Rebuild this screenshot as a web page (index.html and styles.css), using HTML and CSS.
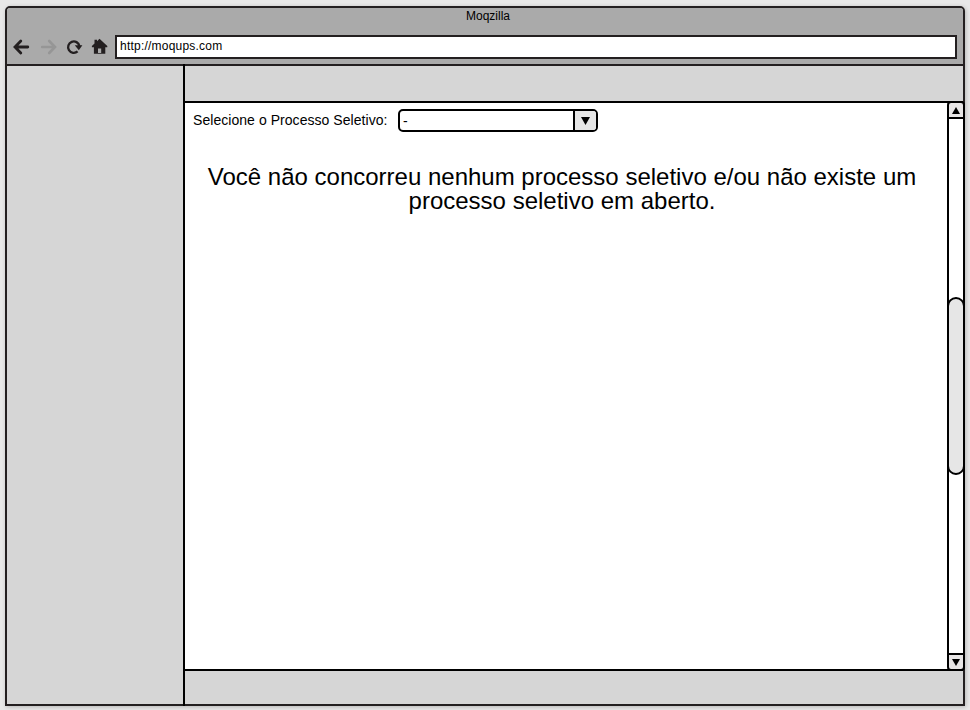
FILE: index.html
```html
<!DOCTYPE html>
<html lang="pt-BR">
<head>
<meta charset="utf-8">
<title>Moqzilla</title>
<link rel="stylesheet" href="styles.css">
</head>
<body>
<div class="window">
  <header class="chrome">
    <div class="title">Moqzilla</div>
    <div class="toolbar">
      <svg class="nav" width="108" height="24" viewBox="7 35 108 24" fill="none">
        <path d="M27.800 47H16M20.800 41L15 47L20.800 53" stroke="#231f20" stroke-width="2.8" stroke-linecap="round"/>
        <path d="M42.200 47H54M49.200 41L55 47L49.200 53" stroke="#969696" stroke-width="2.6" stroke-linecap="round"/>
        <path d="M77.600 51.400A5.700 5.700 0 1 1 79.400 46" stroke="#231f20" stroke-width="2.3"/>
        <path d="M74.800 45.200H82.400L78.800 50.200Z" fill="#231f20"/>
        <path d="M99.500 38.800L107.300 46V47.200H105.300V53.800H93.900V47.200H91.900V46L94.500 43.500V39.800H97V41.200ZM98 48.500V53H101.200V48.500Z" fill="#231f20" fill-rule="evenodd"/>
      </svg>
      <div class="url">http://moqups.com</div>
    </div>
  </header>
  <div class="body">
    <aside class="sidebar"></aside>
    <main class="main">
      <div class="banner"></div>
      <section class="content">
        <div class="page">
          <div class="field">
            <span class="label">Selecione o Processo Seletivo:</span>
            <div class="select">
              <span class="value">-</span>
              <span class="drop"><svg width="9" height="8" viewBox="0 0 9 8"><path d="M0 0H9L4.500 8Z"/></svg></span>
            </div>
          </div>
          <p class="message">Você não concorreu nenhum processo seletivo e/ou não existe um<br>processo seletivo em aberto.</p>
        </div>
        <div class="scrollbar">
          <div class="step up"><svg width="8" height="7" viewBox="0 0 8 7"><path d="M4 0L8 7H0Z"/></svg></div>
          <div class="track"><div class="thumb"></div></div>
          <div class="step down"><svg width="8" height="7" viewBox="0 0 8 7"><path d="M0 0H8L4 7Z"/></svg></div>
        </div>
      </section>
      <footer class="footer"></footer>
    </main>
  </div>
</div>
</body>
</html>
```
FILE: styles.css
```css
* { box-sizing: border-box; }
body {
  margin: 0;
  height: 710px;
  padding: 6px 5px 4px;
  overflow: hidden;
  background: #e8e8e8;
  font-family: "Liberation Sans", Arial, sans-serif;
  color: #000;
}
.window {
  width: 960px;
  height: 700px;
  display: flex;
  flex-direction: column;
  border: 2px solid #231f20;
  border-radius: 5px 5px 0 0;
  background: #d6d6d6;
  box-shadow: 1px 1px 4px rgba(0, 0, 0, .22);
}
.chrome {
  height: 58px;
  flex: none;
  border-bottom: 2px solid #231f20;
  border-radius: 3px 3px 0 0;
  background: #aaa;
}
.title {
  height: 27px;
  padding: 1px 0 0 6px;
  font-size: 12px;
  line-height: 14px;
  text-align: center;
}
.toolbar { display: flex; }
.nav { flex: none; display: block; }
.url {
  width: 842px;
  height: 24px;
  padding: 2px 3px;
  border: 2px solid #231f20;
  background: #fff;
  font-size: 12px;
  line-height: 14px;
  letter-spacing: .22px;
}
.body { flex: 1; display: flex; min-height: 0; }
.sidebar {
  width: 178px;
  margin: -2px 0;
  border-right: 2px solid #000;
}
.main { flex: 1; display: flex; flex-direction: column; }
.banner { height: 35px; }
.content {
  height: 570px;
  display: flex;
  border: solid #000;
  border-width: 2px 0;
  background: #fff;
}
.page { flex: 1; }
.field { display: flex; padding: 6px 0 0 8px; }
.label {
  width: 205px;
  font-size: 14px;
  line-height: 22px;
  letter-spacing: .05px;
  white-space: nowrap;
}
.select {
  width: 200px;
  height: 23px;
  display: flex;
  border: 2px solid #000;
  border-radius: 5px;
  background: #fff;
  overflow: hidden;
}
.value { flex: 1; padding-left: 3px; font-size: 14px; line-height: 20px; }
.drop {
  width: 23px;
  display: flex;
  align-items: center;
  justify-content: center;
  border-left: 2px solid #000;
  background: #e6e6e6;
}
.message {
  margin: 33px 0 0;
  padding-right: 8px;
  font-size: 24px;
  line-height: 24px;
  text-align: center;
  white-space: nowrap;
}
.scrollbar {
  width: 18px;
  margin: -2px -2px -2px 0;
  display: flex;
  flex-direction: column;
  flex: none;
  z-index: 1;
}
.step {
  height: 18px;
  display: flex;
  align-items: center;
  justify-content: center;
  border: 2px solid #000;
  background: #e8e6e6;
}
.up { border-radius: 4px 4px 0 0; }
.down { border-radius: 0 0 4px 4px; }
.track {
  flex: 1;
  padding-top: 178px;
  border: solid #000;
  border-width: 0 2px;
  background: #fff;
}
.thumb {
  height: 178px;
  margin: 0 -2px;
  border: 2px solid #000;
  border-radius: 9px;
  background: #e6e6e6;
}
.footer { flex: 1; }
```
